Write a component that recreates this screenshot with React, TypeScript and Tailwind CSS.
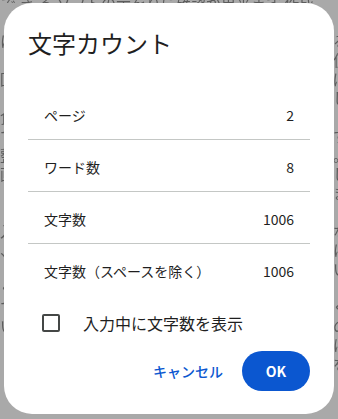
import React from "react"

const leftChars = ["に", "", "回", "", "食", "て", "整", "画", "", "", "入", "、", "", "ぐ", "て", "い", "", ""]
const rightChars = ["る", "使", "ば", "し", "", "す", "。", "し", "ま", "", "な", "に", "い", "", "ぐ", "の", "は", "を"]

function Row({ label, value, last }: { label: string; value: string; last?: boolean }) {
  return (
    <div className={"flex h-[52px] items-center justify-between px-4 pt-[2px] " + (last ? "" : "border-b border-[#c4c7c5]")}>
      <span className="text-sm text-[#1f1f1f]">{label}</span>
      <span className="text-sm text-[#1f1f1f]">{value}</span>
    </div>
  )
}

export default function App() {
  return (
    <div
      className="relative w-[338px] h-[419px] overflow-hidden bg-[#a9a9a9]"
      style={{ fontFamily: '"Noto Sans CJK JP", "Noto Sans", Roboto, sans-serif' }}
    >
      {/* document behind the scrim */}
      <div className="flex h-full flex-col text-[15px] text-[#5c5c5c] blur-[0.3px]">
        <div className="h-[10px] overflow-hidden whitespace-nowrap leading-[19px] -mt-[7px] pl-[1px]">
          で き る ソフトの示をりに確認が出来ます 作成
        </div>
        <div className="flex flex-1 justify-between pt-[28px]">
          <div className="w-[5px] overflow-hidden leading-[19px]">
            {leftChars.map((c, i) => (
              <p key={i} className="h-[19px]">{c}</p>
            ))}
          </div>
          <div className="w-[5px] overflow-hidden leading-[19px]">
            {rightChars.map((c, i) => (
              <p key={i} className="h-[19px]">{c}</p>
            ))}
          </div>
        </div>
      </div>

      <div className="absolute left-[4px] top-[3px] w-[330px] h-[411px] rounded-[28px] bg-white px-6 pt-6 flex flex-col">
        <h1 className="text-2xl leading-8 text-[#1f1f1f]">文字カウント</h1>

        <div className="mt-[29px] flex flex-col">
          <Row label="ページ" value="2" />
          <Row label="ワード数" value="8" />
          <Row label="文字数" value="1006" />
          <Row label="文字数（スペースを除く）" value="1006" last />
        </div>

        <div className="mt-[7px] flex h-10 items-center">
          <div className="ml-[14px] w-[18px] h-[18px] rounded-[2px] border-2 border-[#444746]"></div>
          <span className="ml-[23px] text-base text-[#1f1f1f]">入力中に文字数を表示</span>
        </div>

        <div className="mt-2 flex items-center justify-end gap-[9px]">
          <button className="h-10 pl-3 pr-[10px] text-sm font-medium text-[#0b57d0]">キャンセル</button>
          <button className="h-10 w-[68px] rounded-full bg-[#0b57d0] text-sm font-bold text-white">OK</button>
        </div>
      </div>
    </div>
  )
}
